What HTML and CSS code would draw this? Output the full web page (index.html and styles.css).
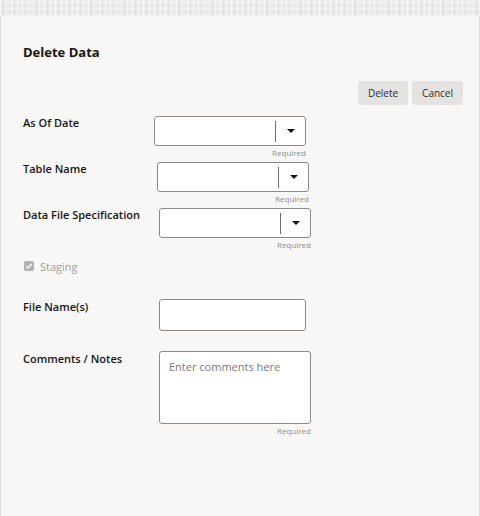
FILE: index.html
```html
<!DOCTYPE html>
<html lang="en">
<head>
  <meta charset="UTF-8">
  <meta name="viewport" content="width=device-width, initial-scale=1.0">
  <title>Delete Data</title>
  <link rel="stylesheet" href="styles.css">
</head>
<body>
  <div class="topbar"></div>
  <div class="dialog">
    <h1 class="dialog__title">Delete Data</h1>
    <div class="dialog__actions">
      <button class="btn">Delete</button>
      <button class="btn">Cancel</button>
    </div>
    <form class="form">
      <div class="form__row">
        <label class="form__label">As Of Date</label>
        <div class="form__field form__field--s0">
          <div class="select">
            <span class="select__value"></span>
            <span class="select__divider"></span>
            <span class="select__arrow"></span>
          </div>
          <div class="form__hint">Required</div>
        </div>
      </div>
      <div class="form__row">
        <label class="form__label">Table Name</label>
        <div class="form__field form__field--s1">
          <div class="select">
            <span class="select__value"></span>
            <span class="select__divider"></span>
            <span class="select__arrow"></span>
          </div>
          <div class="form__hint">Required</div>
        </div>
      </div>
      <div class="form__row">
        <label class="form__label">Data File Specification</label>
        <div class="form__field form__field--s2">
          <div class="select">
            <span class="select__value"></span>
            <span class="select__divider"></span>
            <span class="select__arrow"></span>
          </div>
          <div class="form__hint">Required</div>
        </div>
      </div>
      <div class="check">
        <span class="check__box">
          <svg width="8" height="8" viewBox="0 0 8 8"><path d="M1.3 4.2 L3.1 6 L6.7 2" fill="none" stroke="#fff" stroke-width="1.4"/></svg>
        </span>
        <span class="check__text">Staging</span>
      </div>
      <div class="form__row form__row--file">
        <label class="form__label form__label--low">File Name(s)</label>
        <div class="form__field form__field--s2">
          <input class="input" type="text">
        </div>
      </div>
      <div class="form__row form__row--notes">
        <label class="form__label form__label--low">Comments / Notes</label>
        <div class="form__field form__field--s2">
          <textarea class="textarea" placeholder="Enter comments here"></textarea>
          <div class="form__hint">Required</div>
        </div>
      </div>
    </form>
  </div>
</body>
</html>
```

FILE: styles.css
```css
html,
body {
  margin: 0;
  height: 100%;
}

body {
  font-family: "Open Sans", "Noto Sans", sans-serif;
  color: #161513;
  background: #f8f7f5;
  display: flex;
  flex-direction: column;
}

/* textured strip above the dialog */
.topbar {
  height: 16px;
  flex-shrink: 0;
  background-color: #ebebea;
  background-image:
    repeating-linear-gradient(90deg, rgba(255, 255, 255, 0.6) 0 1px, transparent 1px 3px, rgba(212, 212, 210, 0.45) 3px 4px, transparent 4px 6px, rgba(255, 255, 255, 0.4) 6px 7px, transparent 7px 11px),
    repeating-linear-gradient(0deg, rgba(255, 255, 255, 0.35) 0 1px, transparent 1px 3px, rgba(218, 218, 216, 0.4) 3px 4px, transparent 4px 7px);
}

.dialog {
  flex: 1;
  border-left: 1px solid #dcdbd9;
  border-right: 1px solid #dcdbd9;
  padding: 26px 16px 0 22px;
}

.dialog__title {
  margin: 0;
  font-size: 13px;
  line-height: 20px;
  font-weight: 700;
}

.dialog__actions {
  display: flex;
  justify-content: flex-end;
  gap: 4px;
  margin-top: 19px;
}

.btn {
  height: 24px;
  padding: 0 10px;
  border: none;
  border-radius: 3px;
  background: #e4e3e1;
  color: #2b2a28;
  font-family: inherit;
  font-size: 10px;
}

.form {
  margin-top: 11px;
}

.form__row {
  display: flex;
  align-items: flex-start;
}

.form__label {
  width: 131px;
  flex-shrink: 0;
  font-size: 11px;
  line-height: 14px;
  font-weight: 600;
}

.form__label--low {
  padding-top: 1px;
}

.form__field {
  width: 152px;
}

.form__field--s1 {
  margin-left: 3px;
}

.form__field--s2 {
  margin-left: 5px;
}

.form__hint {
  height: 16px;
  text-align: right;
  font-size: 8px;
  line-height: 13px;
  color: #8e8d8b;
}

.select {
  height: 28px;
  display: flex;
  align-items: center;
  background: #fff;
  border: 1px solid #8b8a88;
  border-radius: 3px;
}

.select__value {
  flex: 1;
}

.select__divider {
  width: 1px;
  height: 21px;
  background: #6f6e6c;
}

.select__arrow {
  width: 0;
  height: 0;
  margin: 0 10px 0 11px;
  border-left: 4px solid transparent;
  border-right: 4px solid transparent;
  border-top: 4px solid #161513;
}

.check {
  display: flex;
  align-items: center;
  gap: 6px;
  margin-top: 4px;
  height: 16px;
  margin-left: 1px;
}

.check__box {
  width: 10px;
  height: 10px;
  border-radius: 2px;
  background: #b2b1af;
  display: flex;
  align-items: center;
  justify-content: center;
}

.check__text {
  font-size: 11px;
  color: #a09f9d;
}

.form__row--file {
  margin-top: 25px;
}

.input {
  box-sizing: border-box;
  width: 147px;
  height: 32px;
  display: block;
  border: 1px solid #8b8a88;
  border-radius: 3px;
  background: #fff;
}

.form__row--notes {
  margin-top: 20px;
}

.textarea {
  box-sizing: border-box;
  display: block;
  width: 152px;
  height: 73px;
  margin: 0;
  padding: 8px 9px;
  resize: none;
  border: 1px solid #8b8a88;
  border-radius: 3px;
  background: #fff;
  font-family: inherit;
  font-size: 11px;
  line-height: 14px;
}

.textarea::placeholder {
  color: #7a7977;
}
```
